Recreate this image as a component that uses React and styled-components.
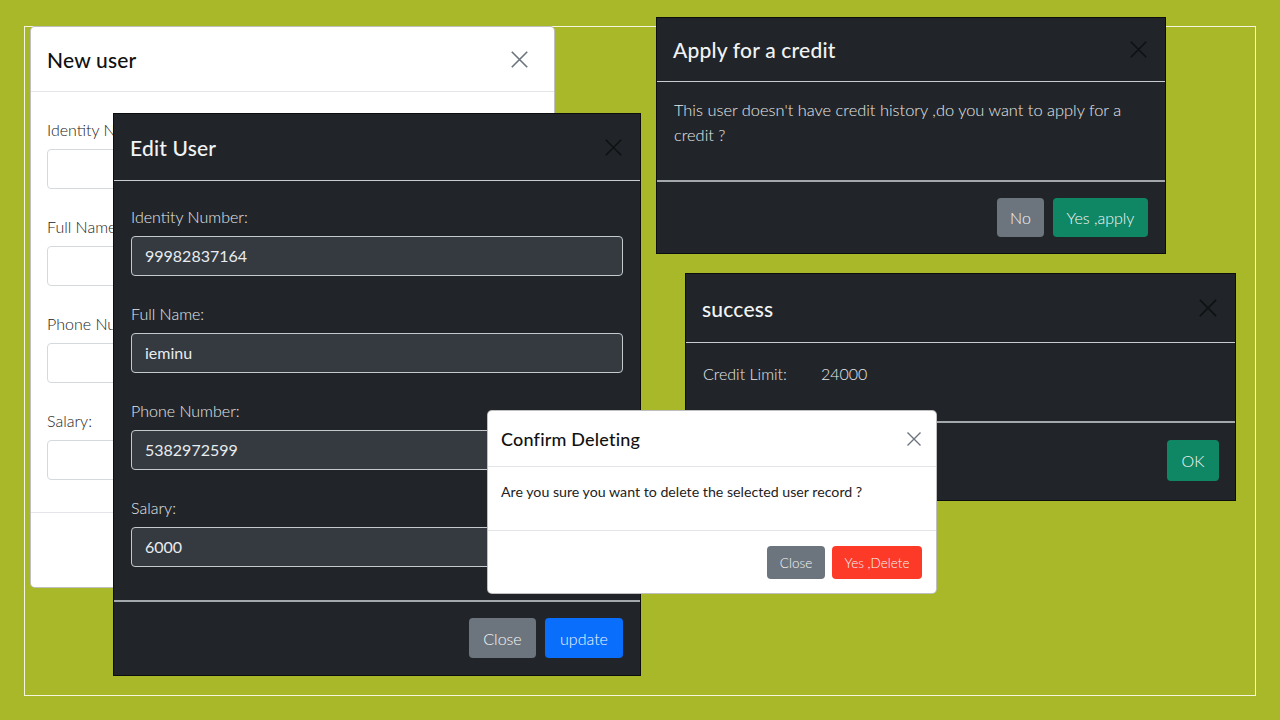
import styled, { createGlobalStyle } from "styled-components";

const GlobalStyle = createGlobalStyle`
  html, body {
    margin: 0;
    padding: 0;
    background: #a8b828;
  }
  body {
    font-family: Lato, "Open Sans", "Liberation Sans", sans-serif;
  }
  * {
    box-sizing: border-box;
  }
`;

const Desktop = styled.div`
  position: relative;
  width: 1280px;
  height: 720px;
  overflow: hidden;
  background: #a8b828;
`;

const Frame = styled.div`
  position: absolute;
  left: 24px;
  top: 26px;
  width: 1232px;
  height: 670px;
  border: 1px solid #f3f5dc;
`;

const Modal = styled.section`
  position: absolute;
  left: ${(p) => p.$x}px;
  top: ${(p) => p.$y}px;
  width: ${(p) => p.$w}px;
  height: ${(p) => p.$h}px;
  display: flex;
  flex-direction: column;
  background: ${(p) => (p.$dark ? "#212529" : "#ffffff")};
  color: ${(p) => (p.$dark ? "#dee2e6" : "#212529")};
  border: 1px solid ${(p) => (p.$dark ? "#0c0d0f" : "rgba(0, 0, 0, 0.25)")};
  border-radius: ${(p) => (p.$dark ? "0" : "5px")};
  overflow: hidden;
`;

const Header = styled.header`
  flex: 0 0 ${(p) => p.$h}px;
  display: flex;
  align-items: center;
  justify-content: space-between;
  padding: ${(p) => (p.$small ? "0 14px 0 13px" : "0 17px 0 16px")};
  border-bottom: 1px solid ${(p) => (p.$dark ? "#c9cdd1" : "#e3e5e8")};
`;

const Title = styled.h2`
  margin: 0;
  font-size: ${(p) => (p.$small ? "18px" : "21px")};
  font-weight: 500;
  color: ${(p) => (p.$dark ? "#f1f3f5" : "#111")};
  letter-spacing: 0.2px;
`;

const CloseX = styled.svg`
  width: ${(p) => p.$size}px;
  height: ${(p) => p.$size}px;
  margin-right: ${(p) => p.$offset || 0}px;
  flex: none;
`;

const Body = styled.div`
  flex: 1;
  display: flex;
  flex-direction: column;
  padding: ${(p) => p.$pad};
  font-size: ${(p) => p.$fs || 16}px;
  line-height: ${(p) => p.$lh || 24}px;
`;

const Field = styled.div`
  display: flex;
  flex-direction: column;
  gap: 7px;
  margin-bottom: 26px;

  &:last-child {
    margin-bottom: 0;
  }
`;

const Label = styled.label`
  font-size: 16px;
  line-height: 24px;
  font-weight: 300;
  color: ${(p) => (p.$dark ? "#e4e7ea" : "#222")};
`;

const Input = styled.div`
  height: 40px;
  display: flex;
  align-items: center;
  padding: 0 13px;
  border-radius: 4px;
  font-size: 16px;
  background: ${(p) => (p.$dark ? "#343a40" : "#fff")};
  border: 1px solid ${(p) => (p.$dark ? "#c4c9ce" : "#d6d9dc")};
  color: #e9ecef;
`;

const Footer = styled.footer`
  flex: 0 0 ${(p) => p.$h}px;
  display: flex;
  justify-content: flex-end;
  align-items: flex-start;
  gap: ${(p) => p.$gap || 9}px;
  padding: ${(p) => p.$pad};
  border-top: ${(p) => (p.$dark ? "2px solid #a3a8ad" : "1px solid #e3e5e8")};
`;

const colors = {
  gray: "#6c757d",
  blue: "#0a6efd",
  green: "#0f8765",
  red: "#fc3a27",
};

const Button = styled.button`
  height: ${(p) => p.$h || 40}px;
  min-width: ${(p) => p.$w}px;
  padding: 0 12px;
  border: none;
  border-radius: 4px;
  background: ${(p) => colors[p.$variant]};
  color: #f4f6f8;
  font-family: inherit;
  font-size: ${(p) => p.$fs || 16}px;
  font-weight: 300;
`;

const Row = styled.div`
  display: flex;
  gap: 34px;
  font-weight: 300;
  color: #e6e8ea;
`;

const Text = styled.p`
  margin: 0;
  font-weight: ${(p) => p.$weight || 300};
  color: ${(p) => (p.$dark ? "#e6e8ea" : "#222")};
`;

function Close({ size = 18, color, offset }) {
  return (
    <CloseX $size={size} $offset={offset} viewBox="0 0 16 16">
      <path
        d="M1.5 1.5 L14.5 14.5 M14.5 1.5 L1.5 14.5"
        stroke={color}
        strokeWidth="1.4"
        fill="none"
      />
    </CloseX>
  );
}

const fields = [
  { label: "Identity Number:", value: "99982837164" },
  { label: "Full Name:", value: "ieminu" },
  { label: "Phone Number:", value: "5382972599" },
  { label: "Salary:", value: "6000" },
];

export default function App() {
  return (
    <Desktop>
      <GlobalStyle />
      <Frame />

      <Modal $x={30} $y={26} $w={525} $h={562}>
        <Header $h={65}>
          <Title>New user</Title>
          <Close size={19} color="#6c757d" offset={8} />
        </Header>
        <Body $pad="26px 17px 0 16px">
          {fields.map((f) => (
            <Field key={f.label}>
              <Label>{f.label}</Label>
              <Input />
            </Field>
          ))}
        </Body>
        <Footer $h={75} />
      </Modal>

      <Modal $dark $x={113} $y={113} $w={528} $h={563}>
        <Header $dark $h={67}>
          <Title $dark>Edit User</Title>
          <Close size={19} color="#0f1113" offset={0} />
        </Header>
        <Body $pad="24px 17px 0 17px">
          {fields.map((f) => (
            <Field key={f.label}>
              <Label $dark>{f.label}</Label>
              <Input $dark>{f.value}</Input>
            </Field>
          ))}
        </Body>
        <Footer $dark $h={75} $pad="16px 17px 0 0">
          <Button $variant="gray" $w={67}>
            Close
          </Button>
          <Button $variant="blue" $w={78}>
            update
          </Button>
        </Footer>
      </Modal>

      <Modal $dark $x={656} $y={17} $w={510} $h={237}>
        <Header $dark $h={64}>
          <Title $dark>Apply for a credit</Title>
          <Close size={19} color="#0f1113" offset={0} />
        </Header>
        <Body $pad="15px 30px 0 17px" $fs={16.4} $lh={25}>
          <Text $dark>
            This user doesn't have credit history ,do you want to apply for a
            credit ?
          </Text>
        </Body>
        <Footer $dark $h={73} $pad="16px 17px 0 0">
          <Button $variant="gray" $w={47} $h={39}>
            No
          </Button>
          <Button $variant="green" $w={95} $h={39}>
            Yes ,apply
          </Button>
        </Footer>
      </Modal>

      <Modal $dark $x={685} $y={273} $w={551} $h={228}>
        <Header $dark $h={69}>
          <Title $dark>success</Title>
          <Close size={20} color="#0f1113" offset={0} />
        </Header>
        <Body $pad="19px 17px 0 17px">
          <Row>
            <span>Credit Limit:</span>
            <span>24000</span>
          </Row>
        </Body>
        <Footer $dark $h={79} $pad="17px 16px 0 0">
          <Button $variant="green" $w={52} $h={41}>
            OK
          </Button>
        </Footer>
      </Modal>

      <Modal $x={487} $y={410} $w={450} $h={184}>
        <Header $small $h={56}>
          <Title $small>Confirm Deleting</Title>
          <Close size={16} color="#6c757d" offset={0} />
        </Header>
        <Body $pad="15px 14px 0 13px" $fs={14.2} $lh={20}>
          <Text $weight={400}>
            Are you sure you want to delete the selected user record ?
          </Text>
        </Body>
        <Footer $h={63} $gap={7} $pad="15px 14px 0 0">
          <Button $variant="gray" $w={58} $h={33} $fs={13.5}>
            Close
          </Button>
          <Button $variant="red" $w={90} $h={33} $fs={13.5}>
            Yes ,Delete
          </Button>
        </Footer>
      </Modal>
    </Desktop>
  );
}
